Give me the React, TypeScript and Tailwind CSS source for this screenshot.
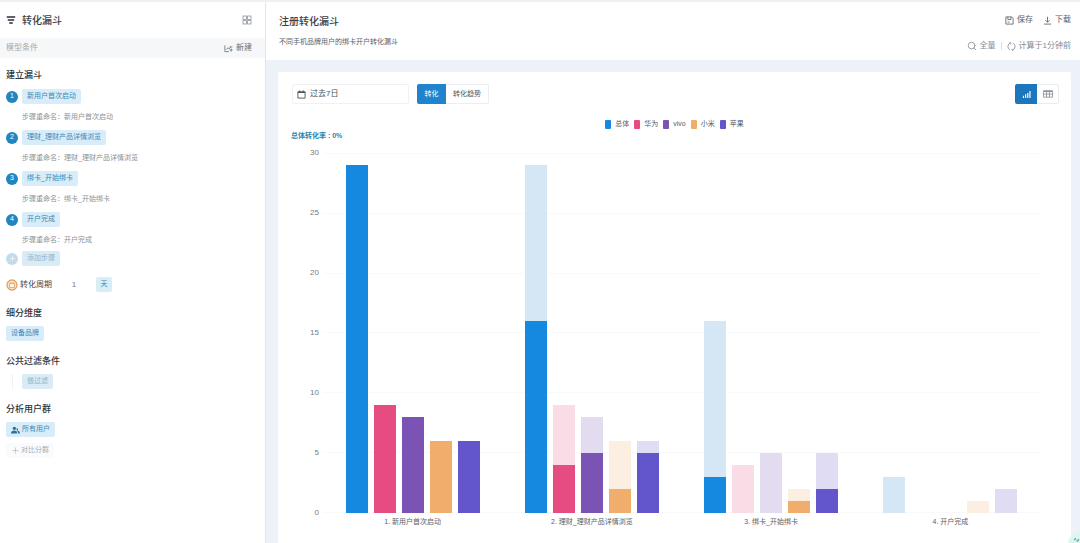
import React from 'react';
import { Plus, Search } from 'lucide-react';

interface Step {
    name: string;
    values: number[];
}

interface Series {
    label: string;
    solid: string;
    faded: string;
}

const SERIES: Series[] = [
    { label: '总体', solid: 'bg-[#1588e0]', faded: 'bg-[#d5e7f5]' },
    { label: '华为', solid: 'bg-[#e64c82]', faded: 'bg-[#fadce7]' },
    { label: 'vivo', solid: 'bg-[#7a53b5]', faded: 'bg-[#e3dcf0]' },
    { label: '小米', solid: 'bg-[#f0ad6c]', faded: 'bg-[#fceee0]' },
    { label: '苹果', solid: 'bg-[#6355cc]', faded: 'bg-[#e0dcf4]' },
];

const STEPS: Step[] = [
    { name: '新用户首次启动', values: [29, 9, 8, 6, 6] },
    { name: '理财_理财产品详情浏览', values: [16, 4, 5, 2, 5] },
    { name: '绑卡_开始绑卡', values: [3, 0, 0, 1, 2] },
    { name: '开户完成', values: [0, 0, 0, 0, 0] },
];

const MAX = 30;
const TICKS = [30, 25, 20, 15, 10, 5, 0];

const FunnelIcon = () => (
    <svg viewBox="0 0 10 10" className="h-[10px] w-[10px] text-[#2b3038]" fill="none" stroke="currentColor" strokeWidth="1.6">
        <path d="M0.8 2h8.4M1.8 5h6.4M3.2 8h3.6" />
    </svg>
);

const GridIcon = () => (
    <svg viewBox="0 0 10 10" className="h-[10px] w-[10px]" fill="none" stroke="currentColor" strokeWidth="0.8">
        <rect x="1" y="1" width="3.4" height="3.4" />
        <rect x="5.6" y="1" width="3.4" height="3.4" />
        <rect x="1" y="5.6" width="3.4" height="3.4" />
        <rect x="5.6" y="5.6" width="3.4" height="3.4" />
    </svg>
);

const NewModelIcon = () => (
    <svg viewBox="0 0 10 10" className="h-[9px] w-[9px]" fill="none" stroke="currentColor" strokeWidth="0.9">
        <path d="M1 1.5v7h4.5M2.5 6.2l2-2 1.2 1.2L7.5 3.4M6 3.2h3.4M6.4 6.6h3M8 5.2v3.2" />
    </svg>
);

const BarsIcon = () => (
    <svg viewBox="0 0 10 10" className="h-[9px] w-[9px]" fill="currentColor">
        <path d="M1 6.4h1.2V9H1zM3.4 4.8h1.3V9H3.4zM5.8 3.2h1.3V9H5.8zM8.2 1h1.3v8H8.2z" />
    </svg>
);

const TableIcon = () => (
    <svg viewBox="0 0 10 8" className="h-[8px] w-[10px]" fill="none" stroke="currentColor" strokeWidth="0.8">
        <path d="M0.5 1h9v6.2h-9zM0.5 4.1h9M3.5 1.5v5.7M6.5 1.5v5.7" />
        <path d="M0.5 1.2h9" strokeWidth="1.4" />
    </svg>
);

const UsersIcon = () => (
    <svg viewBox="0 0 12 10" className="h-[8px] w-[9px] text-[#2c7198]" fill="currentColor">
        <circle cx="4.5" cy="2.8" r="2.2" />
        <path d="M0 9.5C0 6.8 2 5.6 4.5 5.6S8.2 6.8 8.2 9.5z" />
        <path d="M7.6 2.4a1.7 1.7 0 0 1 .8 3.2 3.6 3.6 0 0 1 3.4 3.9H9.4C9.4 7.6 8.8 6.4 7.6 5.6z" />
    </svg>
);

const CycleIcon = () => (
    <svg viewBox="0 0 12 12" className="h-[12px] w-[12px]" fill="none">
        <circle cx="6" cy="6" r="5" fill="#fbe6d2" stroke="#e3a064" strokeWidth="1.3" />
        <path d="M3.6 4.6h4.8v3.8H3.6z" fill="#fff" stroke="#eda55f" strokeWidth="1" />
        <path d="M4.8 3v1.6M7.2 3v1.6" stroke="#eda55f" strokeWidth="0.9" />
    </svg>
);

const CalendarIcon = () => (
    <svg viewBox="0 0 10 10" className="h-[9px] w-[9px] shrink-0" fill="none" stroke="currentColor" strokeWidth="1">
        <path d="M1 2h8v7H1z" />
        <path d="M1 2.6h8" strokeWidth="1.4" />
        <path d="M3 0.4v2M7 0.4v2" />
    </svg>
);

const SaveIcon = () => (
    <svg viewBox="0 0 10 10" className="h-[9px] w-[9px]" fill="none" stroke="currentColor" strokeWidth="0.9">
        <path d="M1 1h6.4L9 2.6V9H1z" />
        <path d="M3.2 1v3h3.4V1M3 6.8h2" />
    </svg>
);

const DownloadIcon = () => (
    <svg viewBox="0 0 10 10" className="h-[9px] w-[9px]" fill="none" stroke="currentColor" strokeWidth="0.9">
        <path d="M5 0.8v6M2.6 4.6L5 7l2.4-2.4M1 9h8" />
    </svg>
);

const RefreshIcon = () => (
    <svg viewBox="0 0 10 10" className="h-[9px] w-[9px]" fill="none" stroke="currentColor" strokeWidth="0.9">
        <path d="M3.4 8.7A4 4 0 0 1 4.2 1.1M6.6 1.3A4 4 0 0 1 5.8 8.9" />
        <path d="M2.6 0.9h1.8v1.6M7.4 9.1H5.6V7.5" strokeWidth="0.7" />
    </svg>
);

const Chip: React.FC<{ children: React.ReactNode; muted?: boolean }> = ({ children, muted }) => (
    <button
        type="button"
        className={`flex h-[15px] items-center gap-[2px] rounded-[2px] px-[5px] text-[7px] ${muted ? 'bg-[#d9ebf5] text-[#93b4c8]' : 'bg-[#d8edf9] text-[#3f87b3]'}`}
    >
        {children}
    </button>
);

const SectionTitle: React.FC<{ children: React.ReactNode }> = ({ children }) => (
    <h2 className="text-[9px] leading-3 font-medium text-[#2f343b]">{children}</h2>
);

const Sidebar = () => (
    <aside className="w-[266px] shrink-0 border-r border-[#e1e6ec] bg-white">
        <div className="flex h-9 items-center justify-between pr-[13px] pl-[6px]">
            <h1 className="flex items-center gap-[6px] text-[10px] font-medium text-[#3a4049]">
                <FunnelIcon />
                转化漏斗
            </h1>
            <button type="button" aria-label="看板" className="text-[#8d949c]">
                <GridIcon />
            </button>
        </div>
        <div className="flex h-5 items-center justify-between bg-[#f5f7f9] pr-[13px] pl-[6px] text-[8px]">
            <span className="text-[#a5a9ae]">模型条件</span>
            <button type="button" className="flex items-center gap-[3px] text-[#686e76]">
                <NewModelIcon />
                新建
            </button>
        </div>

        <div className="px-[6px] pt-[11px]">
            <SectionTitle>建立漏斗</SectionTitle>
            <ol className="pt-2">
                {STEPS.map((step, i) => (
                    <li key={step.name} className="h-[41px] last:h-[39px]">
                        <div className="flex items-center gap-1">
                            <span className="flex h-3 w-3 items-center justify-center rounded-full bg-[#2385bf] text-[7px] text-white">{i + 1}</span>
                            <Chip>{step.name}</Chip>
                        </div>
                        <div className="pt-2 pl-4 text-[7px] leading-[10px] text-[#8c9197]">
                            步骤重命名：<span>{step.name}</span>
                        </div>
                    </li>
                ))}
            </ol>
            <div className="flex items-center gap-1">
                <span className="flex h-3 w-3 items-center justify-center rounded-full bg-[#c3dceb] text-white">
                    <Plus size={7} />
                </span>
                <Chip muted>添加步骤</Chip>
            </div>

            <div className="flex items-center pt-[11px] text-[8px] text-[#3f454c]">
                <CycleIcon />
                <label htmlFor="cycle" className="pl-[2px]">转化周期</label>
                <input id="cycle" defaultValue="1" className="ml-3 w-5 text-center text-[8px] text-[#777d84] outline-none" />
                <button type="button" className="ml-3 flex h-[15px] w-4 items-center justify-center rounded-[2px] bg-[#d8edf5] text-[7px] text-[#3f87b3]">天</button>
            </div>

            <div className="pt-[15px]">
                <SectionTitle>细分维度</SectionTitle>
            </div>
            <div className="flex pt-[7px]">
                <Chip>设备品牌</Chip>
            </div>

            <div className="pt-[14px]">
                <SectionTitle>公共过滤条件</SectionTitle>
            </div>
            <div className="mt-[7px] ml-[6px] flex border-l border-[#eef1f4] pl-[9px]">
                <Chip muted>做过滤</Chip>
            </div>

            <div className="pt-[14px]">
                <SectionTitle>分析用户群</SectionTitle>
            </div>
            <div className="flex flex-col items-start gap-[6px] pt-[7px]">
                <Chip>
                    <UsersIcon />
                    所有用户
                </Chip>
                <button type="button" className="flex h-[15px] items-center gap-px rounded-[2px] bg-[#fafbfd] px-[5px] text-[7px] text-[#a7abb5]">
                    <Plus size={9} strokeWidth={1.5} />
                    对比分群
                </button>
            </div>
        </div>
    </aside>
);

const Header = () => (
    <header className="flex h-[58px] shrink-0 justify-between bg-white pr-[9px] pl-[13px]">
        <div className="pt-[13px]">
            <h1 className="text-[10px] leading-[14px] font-medium text-[#3a4049]">注册转化漏斗</h1>
            <p className="pt-2 text-[7px] leading-[10px] text-[#5a6068]">不同手机品牌用户的绑卡开户转化漏斗</p>
        </div>
        <div className="flex flex-col items-end pt-3 text-[8px] leading-3">
            <div className="flex gap-[10px] text-[#585e66]">
                <button type="button" className="flex items-center gap-[3px]">
                    <SaveIcon />
                    保存
                </button>
                <button type="button" className="flex items-center gap-[3px]">
                    <DownloadIcon />
                    下载
                </button>
            </div>
            <div className="flex items-center gap-[5px] pt-[14px] text-[#858b93]">
                <button type="button" className="flex items-center gap-[3px]">
                    <Search size={10} />
                    全量
                </button>
                <span className="h-2 w-px bg-[#dadde1]" />
                <button type="button" className="flex items-center gap-[3px]">
                    <RefreshIcon />
                    计算于1分钟前
                </button>
            </div>
        </div>
    </header>
);

const Toolbar = () => (
    <div className="flex items-center justify-between pr-3 pl-[14px]">
        <div className="flex gap-2">
            <label className="flex h-5 w-[117px] items-center gap-1 rounded-[2px] border border-[#f0f1f3] px-1 text-[#4b5158]">
                <CalendarIcon />
                <input aria-label="日期范围" defaultValue="过去7日" className="min-w-0 flex-1 text-[8px] outline-none" />
            </label>
            <div className="flex h-5 text-[7px]">
                <button type="button" className="w-[29px] rounded-l-[2px] bg-[#1f84cd] text-white">转化</button>
                <button type="button" className="w-[43px] rounded-r-[2px] border border-l-0 border-[#ebedf0] text-[#50565e]">转化趋势</button>
            </div>
        </div>
        <div className="flex h-5">
            <button type="button" aria-label="图表" className="flex w-[22px] items-center justify-center rounded-l-[2px] bg-[#1b77bd] text-white">
                <BarsIcon />
            </button>
            <button type="button" aria-label="表格" className="flex w-[22px] items-center justify-center rounded-r-[2px] border border-l-0 border-[#e9ecf3] text-[#858b9a]">
                <TableIcon />
            </button>
        </div>
    </div>
);

const Chart = () => (
    <div className="flex pt-[11px] pr-[31px] pl-[22px]">
        {/* y axis */}
        <div className="flex w-[19px] shrink-0 flex-col text-right text-[8px] leading-3 text-[#777c82]">
            {TICKS.map(t => (
                <div key={t} className="h-[60px]">
                    <div className="-mt-[6px]">{t}</div>
                </div>
            ))}
        </div>
        <div className="ml-1 flex-1">
            <div className="relative h-[360px]">
                <div className="absolute inset-0 flex flex-col justify-between">
                    {TICKS.map(t => (
                        <div key={t} className="h-px bg-[#f8f9fa]" />
                    ))}
                </div>
                <div className="relative grid h-full grid-cols-4">
                    {STEPS.map((step, i) => (
                        <div key={step.name} className="flex items-end justify-center gap-[6px]">
                            {SERIES.map((s, j) => {
                                const prev = i > 0 ? STEPS[i - 1].values[j] : 0;
                                const v = step.values[j];
                                return (
                                    <div key={s.label} className="flex h-full w-[22px] flex-col justify-end">
                                        <div className={s.faded} style={{ height: `${(Math.max(prev - v, 0) / MAX) * 100}%` }} />
                                        <div className={s.solid} style={{ height: `${(v / MAX) * 100}%` }} />
                                    </div>
                                );
                            })}
                        </div>
                    ))}
                </div>
            </div>
            <div className="grid grid-cols-4 pt-[3px] text-center text-[7px] leading-3 text-[#5c6167]">
                {STEPS.map((step, i) => (
                    <div key={step.name}>{i + 1}. {step.name}</div>
                ))}
            </div>
        </div>
    </div>
);

// Floating help bubble, mostly tucked behind the window corner
const HelpBubble = () => (
    <button type="button" aria-label="帮助" className="fixed -right-4 -bottom-4 h-7 w-7 rounded-full bg-[#dff5f1] text-[#4fb5a8]">
        <svg viewBox="0 0 28 28" className="h-7 w-7" fill="none" stroke="currentColor" strokeWidth="1.4">
            <path d="M6 9l2-1.6M8.6 10.4l2.4-2" />
        </svg>
    </button>
);

export default function App() {
    return (
        <div className="flex h-screen overflow-hidden border-t-2 border-[#f0f0f1] bg-[#edf2f8] font-['Liberation_Sans','Noto_Sans_CJK_SC',sans-serif]">
            <Sidebar />
            <main className="flex min-w-0 flex-1 flex-col">
                <Header />
                <section className="mt-3 mr-[9px] ml-3 flex-1 rounded-t-[2px] bg-white pt-3">
                    <Toolbar />
                    <ul className="flex justify-center gap-[5px] pt-[14px] text-[7px] leading-3 text-[#555a61]">
                        {SERIES.map(s => (
                            <li key={s.label} className="flex items-center gap-1">
                                <span className={`h-[9px] w-[6px] rounded-[1px] ${s.solid}`} />
                                {s.label}
                            </li>
                        ))}
                    </ul>
                    <p className="pl-[13px] text-[7px] leading-3 font-semibold text-[#2b83ad]">总体转化率 : 0%</p>
                    <Chart />
                </section>
            </main>
            <HelpBubble />
        </div>
    );
}
